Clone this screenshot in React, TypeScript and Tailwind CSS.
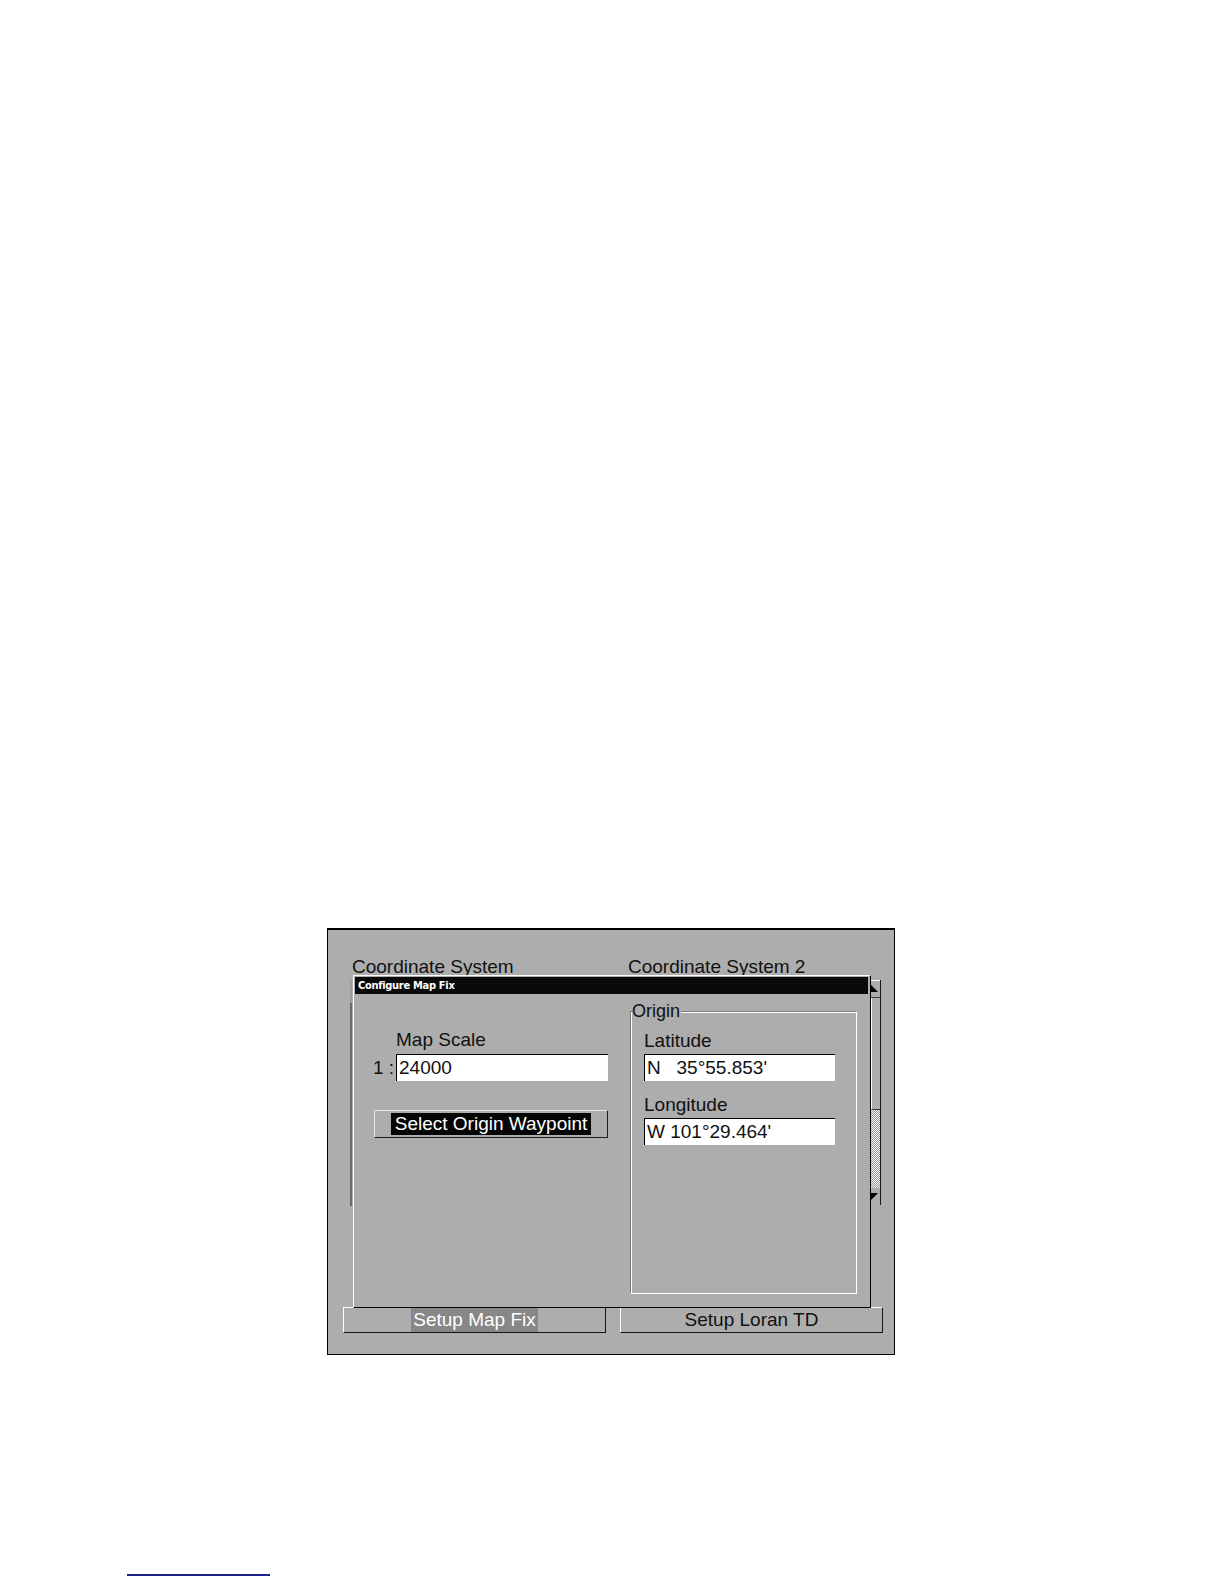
import React from 'react';

// Gray screen capture of a GPS unit's "Configure Map Fix" dialog

const Field: React.FC<{ value: string; className: string }> = ({ value, className }) => (
  <div className={`h-[27px] bg-white border-t border-l border-black pl-[2px] text-[19px] leading-[25px] whitespace-pre ${className}`}>
    {value}
  </div>
);

const ScrollBar: React.FC = () => (
  <div className="w-[10px] h-[225px] flex flex-col border-r border-[#1a1a1a]">
    <div className="h-[18px] border-t border-white border-b border-b-[#3a3a3a] flex items-center">
      <svg width="7" height="8" viewBox="0 0 7 8">
        <polygon points="0,0 7,7 0,7" fill="#000" />
      </svg>
    </div>
    <div className="h-[112px] border-l border-white border-b border-b-[#3a3a3a]" />
    <div className="h-[78px] bg-[repeating-conic-gradient(#f4f4f4_0_25%,#9a9a9a_0_50%)] bg-[length:2px_2px]" />
    <div className="h-[17px] flex items-center">
      <svg width="7" height="8" viewBox="0 0 7 8">
        <polygon points="0,0 7,0 0,7" fill="#000" />
      </svg>
    </div>
  </div>
);

const TabButton: React.FC<{ label: string; active?: boolean }> = ({ label, active }) => (
  <div className="w-[263px] h-[26px] border-t border-l border-white border-b border-r border-b-[#141414] border-r-[#141414] flex items-center justify-center">
    {active ? (
      <span className="bg-[#878787] text-white px-[2px] leading-[24px]">{label}</span>
    ) : (
      <span className="leading-[24px]">{label}</span>
    )}
  </div>
);

const Dialog: React.FC = () => (
  <div className="absolute left-[25px] top-[45px] w-[518px] h-[333px] bg-[#adadad] border border-t-white border-l-white border-r-black border-b-black flex flex-col">
    <div className="ml-[1px] mt-[1px] w-[513px] h-[17px] bg-[#0a0a0a] text-white pl-[3px] text-[11px] leading-[17px] tracking-[-0.3px] font-bold font-stretch-condensed font-['Liberation_Sans_Narrow','DejaVu_Sans_Condensed','DejaVu_Sans',sans-serif]">
      Configure Map Fix
    </div>
    <div className="flex text-[19px] leading-[22px]">
      <div className="ml-[19px] w-[257px] flex flex-col">
        <span className="mt-[35px] ml-[23px]">Map Scale</span>
        <div className="mt-[3px] flex items-center">
          <span className="w-[23px] leading-[27px]">1 :</span>
          <Field value="24000" className="w-[212px]" />
        </div>
        <div className="mt-[29px] ml-[1px] w-[234px] h-[28px] border-t border-l border-[#e6e6e6] border-b border-r border-b-[#1e1e1e] border-r-[#1e1e1e] flex items-center justify-center">
          <span className="bg-[#050505] text-white px-[4px] leading-[22px]">Select Origin Waypoint</span>
        </div>
      </div>
      <div className="relative mt-[17px] w-[227px] h-[283px] border-t border-l border-[#7c7c7c] border-r border-b border-r-white border-b-white shadow-[inset_1px_1px_0_#ffffff] flex flex-col">
        <span className="absolute left-[1px] top-[-12px] text-[18px] leading-[22px] bg-[#adadad] pr-[1px]">Origin</span>
        <span className="mt-[18px] ml-[13px]">Latitude</span>
        <Field value="N   35°55.853'" className="mt-[2px] ml-[13px] w-[191px]" />
        <span className="mt-[13px] ml-[13px]">Longitude</span>
        <Field value="W 101°29.464'" className="mt-[2px] ml-[13px] w-[191px]" />
      </div>
    </div>
  </div>
);

export default function App() {
  return (
    <div className="min-h-[1584px] bg-white pt-[928px] flex flex-col items-start font-['Liberation_Sans',Arial,sans-serif]">
      <div className="relative ml-[327px] w-[568px] h-[427px] border border-t-2 border-black bg-[#adadad] text-[#111111] flex flex-col">
        <div className="flex pt-[26px] text-[19px] leading-[22px]">
          <span className="ml-[24px] w-[276px]">Coordinate System</span>
          <span>Coordinate System 2</span>
        </div>
        <div className="ml-[22px] mt-[2px] w-[531px] h-[226px] flex justify-between">
          <div className="w-[2px] h-full flex flex-col">
            <div className="h-[23px] bg-[#9c9c9c]" />
            <div className="flex-1 bg-[#6a6a6a]" />
          </div>
          <ScrollBar />
        </div>
        <div className="ml-[15px] mt-[101px] flex gap-[14px] text-[19px] leading-[22px]">
          <TabButton active label="Setup Map Fix" />
          <TabButton label="Setup Loran TD" />
        </div>
        <Dialog />
      </div>
      <div className="ml-[127px] mt-[219px] w-[143px] h-[2px] bg-[#1f1f8a]" />
    </div>
  );
}
